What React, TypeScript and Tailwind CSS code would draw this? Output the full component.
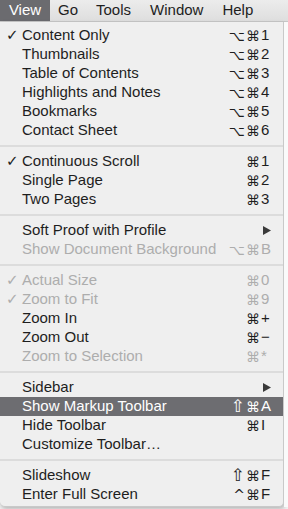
import { ReactNode } from "react";

type Item =
  | { sep: true }
  | {
      sep?: false;
      label: string;
      mods?: string;
      keyChar?: string;
      check?: boolean;
      disabled?: boolean;
      submenu?: boolean;
      active?: boolean;
    };

const items: Item[] = [
  { label: "Content Only", mods: "⌥⌘", keyChar: "1", check: true },
  { label: "Thumbnails", mods: "⌥⌘", keyChar: "2" },
  { label: "Table of Contents", mods: "⌥⌘", keyChar: "3" },
  { label: "Highlights and Notes", mods: "⌥⌘", keyChar: "4" },
  { label: "Bookmarks", mods: "⌥⌘", keyChar: "5" },
  { label: "Contact Sheet", mods: "⌥⌘", keyChar: "6" },
  { sep: true },
  { label: "Continuous Scroll", mods: "⌘", keyChar: "1", check: true },
  { label: "Single Page", mods: "⌘", keyChar: "2" },
  { label: "Two Pages", mods: "⌘", keyChar: "3" },
  { sep: true },
  { label: "Soft Proof with Profile", submenu: true },
  { label: "Show Document Background", mods: "⌥⌘", keyChar: "B", disabled: true },
  { sep: true },
  { label: "Actual Size", mods: "⌘", keyChar: "0", check: true, disabled: true },
  { label: "Zoom to Fit", mods: "⌘", keyChar: "9", check: true, disabled: true },
  { label: "Zoom In", mods: "⌘", keyChar: "+" },
  { label: "Zoom Out", mods: "⌘", keyChar: "−" },
  { label: "Zoom to Selection", mods: "⌘", keyChar: "*", disabled: true },
  { sep: true },
  { label: "Sidebar", submenu: true },
  { label: "Show Markup Toolbar", mods: "⇧⌘", keyChar: "A", active: true },
  { label: "Hide Toolbar", mods: "⌘", keyChar: "I" },
  { label: "Customize Toolbar…" },
  { sep: true },
  { label: "Slideshow", mods: "⇧⌘", keyChar: "F" },
  { label: "Enter Full Screen", mods: "^⌘", keyChar: "F" },
];

function MenuRow({ item }: { item: Exclude<Item, { sep: true }> }) {
  const color = item.active
    ? "text-white"
    : item.disabled
      ? "text-[#adadad]"
      : "text-[#1e1e1e]";
  let right: ReactNode = null;
  if (item.submenu) {
    right = (
      <svg width="8" height="9" viewBox="0 0 8 9" className="mr-[1px]">
        <path d="M0 0 L8 4.5 L0 9 Z" fill={item.active ? "#fff" : "#3a3a3a"} />
      </svg>
    );
  } else if (item.mods) {
    right = (
      <div className="flex items-center">
        {item.mods.split("").map((m, i) => (
          <span
            key={i}
            className={`font-['DejaVu_Sans',sans-serif] leading-none ${m === "⇧" ? "text-[17px] mr-[1px]" : "text-[14px] mr-[1px]"}`}
          >
            {m}
          </span>
        ))}
        <span className="w-[11px] text-left">{item.keyChar}</span>
      </div>
    );
  }
  return (
    <div
      className={`flex h-[19px] items-center pr-[11px] ${item.active ? "bg-[#6d6d71]" : ""} ${color}`}
    >
      <span className="w-[22px] pl-[6px] font-['DejaVu_Sans',sans-serif] text-[15px] leading-none">
        {item.check ? "✓" : ""}
      </span>
      <span className="flex-1 whitespace-nowrap">{item.label}</span>
      {right}
    </div>
  );
}

export default function App() {
  return (
    <div className="relative h-[509px] w-[288px] overflow-hidden bg-[#f2f2f2] font-['Liberation_Sans',Arial,sans-serif] text-[15px]">
      <div className="flex h-[22px] items-center border-b border-[#c8c8c8] bg-gradient-to-b from-[#ececec] to-[#dedede] text-[15px] text-[#1e1e1e]">
        <div className="flex h-full w-[50px] items-center justify-center bg-[#6b6b6f] text-white">View</div>
        <span className="ml-[8px]">Go</span>
        <span className="ml-[18px]">Tools</span>
        <span className="ml-[19px]">Window</span>
        <span className="ml-[19px]">Help</span>
      </div>
      <div className="flex">
        <div className="w-[284px] rounded-b-[5px] border-r border-b border-[#c9c9c9] bg-[#efefef] pt-[4px] pb-[2px] shadow-[1px_2px_4px_rgba(0,0,0,0.25)]">
          {items.map((item, i) =>
            item.sep ? (
              <div key={i} className="flex h-[12px] items-center">
                <div className="h-[2px] w-full bg-[#dcdcdc]" />
              </div>
            ) : (
              <MenuRow key={i} item={item} />
            ),
          )}
        </div>
        <div className="flex-1 bg-[#fafafa]" />
      </div>
    </div>
  );
}
